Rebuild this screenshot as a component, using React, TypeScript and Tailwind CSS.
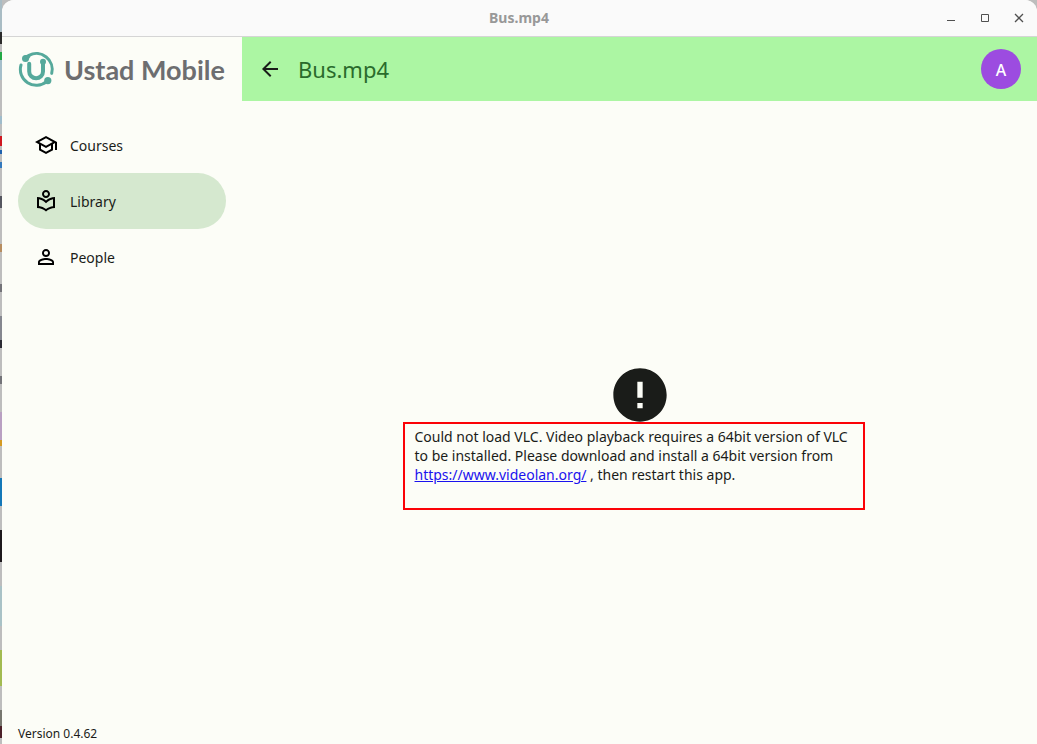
import type { ReactNode } from "react";
import {
  MdArrowBack,
  MdError,
  MdOutlineLocalLibrary,
  MdOutlineSchool,
  MdPersonOutline,
} from "react-icons/md";

function DesktopEdge() {
  return (
    <div aria-hidden="true" className="flex w-0.5 shrink-0 flex-col bg-[#bdbdbd]">
      <div className="h-8 bg-[#a9bcc4]" />
      <div className="h-3 bg-[#2b2b2b]" />
      <div className="mt-2 h-2 bg-[#22a845]" />
      <div className="h-5 bg-[#a5bfca]" />
      <div className="mt-9 h-2 bg-[#9fbccb]" />
      <div className="mt-3 h-2.5 bg-[#cf1820]" />
      <div className="mt-1 h-1 bg-[#1f62ae]" />
      <div className="mt-2 h-1.5 bg-[#3379bd]" />
      <div className="mt-7 h-3 bg-[#55565f]" />
      <div className="mt-9 h-2 bg-[#b78d60]" />
      <div className="mt-8 h-2 bg-[#737378]" />
      <div className="mt-6 h-6 bg-[#85878f]" />
      <div className="h-2 bg-[#2a2a33]" />
      <div className="mt-7 h-2 bg-[#737378]" />
      <div className="mt-7 h-7 bg-[#b9a0c2]" />
      <div className="h-1.5 bg-[#d49a22]" />
      <div className="mt-8 h-7 bg-[#1478b8]" />
      <div className="mt-6 h-8 bg-[#1d191c]" />
      <div className="mt-6 h-10 bg-[#a9c2c6]" />
      <div className="mt-6 h-9 bg-[#a2bb51]" />
      <div className="mt-6 h-4 bg-[#77776f]" />
      <div className="h-3 bg-[#4b2028]" />
    </div>
  );
}

function TitleBar() {
  return (
    <div className="flex h-[37px] items-center justify-end rounded-t-xl border-b border-[#d5d5d5] bg-[#fafafa] pr-[7px]">
      <h1 className="flex-1 pl-24 text-center text-sm font-bold text-[#989898]">Bus.mp4</h1>
      <div className="flex gap-3 text-[#505050]">
        <button type="button" aria-label="Minimize" className="p-[3px]">
          <svg viewBox="0 0 16 16" className="size-4" stroke="currentColor" fill="none">
            <path d="M4 10.5h8" />
          </svg>
        </button>
        <button type="button" aria-label="Maximize" className="p-[3px]">
          <svg viewBox="0 0 16 16" className="size-4" stroke="currentColor" fill="none">
            <path d="M4.5 4.5h7v7h-7z" />
          </svg>
        </button>
        <button type="button" aria-label="Close" className="p-[3px]">
          <svg viewBox="0 0 16 16" className="size-4" stroke="currentColor" strokeWidth="1.3" fill="none">
            <path d="M4 4l8 8M12 4l-8 8" />
          </svg>
        </button>
      </div>
    </div>
  );
}

function Logo() {
  return (
    <div className="flex h-16 items-center gap-2 pl-4">
      <svg viewBox="0 0 37 37" className="size-[37px] shrink-0" fill="none" stroke="#55a99b">
        <g strokeWidth="3" strokeLinecap="round">
          <path d="M11 4.3A15.9 15.9 0 0 1 33.7 22.4" />
          <path d="M3 14A15.9 15.9 0 0 0 28.5 30.6" />
        </g>
        <path d="M11.2 12.8V20.4a6.9 6.9 0 0 0 13.8 0V11" strokeWidth="4" strokeLinecap="round" />
        <g fill="#55a99b" stroke="none">
          <circle cx="7.5" cy="7.4" r="3.5" />
          <path d="M5.8 4.9L11 2.9l1.5 2.8-3 4z" />
          <circle cx="29.8" cy="29.6" r="3.6" />
          <circle cx="25" cy="10.8" r="3" />
        </g>
      </svg>
      <span className="pt-0.5 pl-px font-[Lato] text-[27px] font-bold whitespace-nowrap text-[#6d6e70]">
        Ustad Mobile
      </span>
    </div>
  );
}

function NavItem({ icon, label, active }: { icon: ReactNode; label: string; active?: boolean }) {
  return (
    <a
      href="#"
      aria-current={active ? "page" : undefined}
      className={
        active
          ? "flex h-14 items-center gap-3 rounded-full bg-[#d5e8cf] px-4 text-sm"
          : "flex h-14 items-center gap-3 rounded-full px-4 text-sm"
      }
    >
      <span className="text-2xl text-black">{icon}</span>
      <span className="pt-0.5">{label}</span>
    </a>
  );
}

export default function App() {
  return (
    <div className="flex min-h-screen bg-[#bdbdbd] font-['Noto_Sans',sans-serif] text-[#1a1c19]">
      <DesktopEdge />
      <div className="flex min-w-0 flex-1 flex-col rounded-t-xl bg-[#fcfdf7]">
        <TitleBar />
        <div className="flex flex-1">
          <aside className="flex w-60 shrink-0 flex-col">
            <Logo />
            <nav className="flex-1 px-4 pt-4">
              <NavItem icon={<MdOutlineSchool />} label="Courses" />
              <NavItem icon={<MdOutlineLocalLibrary />} label="Library" active />
              <NavItem icon={<MdPersonOutline />} label="People" />
            </nav>
            <p className="px-4 pb-0.5 text-xs leading-4">Version 0.4.62</p>
          </aside>
          <div className="flex min-w-0 flex-1 flex-col">
            <header className="flex h-16 items-center bg-[#acf6a3] px-4">
              <button type="button" aria-label="Back" className="text-2xl">
                <MdArrowBack />
              </button>
              <h2 className="flex-1 pl-4 text-[22px] text-[#2a6b2c]">Bus.mp4</h2>
              <button
                type="button"
                className="size-10 rounded-full bg-[#9c4ce0] pt-0.5 text-base font-medium text-white"
              >
                A
              </button>
            </header>
            <main className="flex flex-1 flex-col items-center justify-center pt-0.5">
              <MdError className="size-16" />
              <div className="relative w-full max-w-[450px]">
                <p className="text-sm leading-[19px]">
                  Could not load VLC. Video playback requires a 64bit version of VLC to be installed.
                  Please download and install a 64bit version from{" "}
                  <a href="https://www.videolan.org/" className="text-[#1a12ee] underline">
                    https://www.videolan.org/
                  </a>{" "}
                  , then restart this app.
                </p>
                <div className="pointer-events-none absolute -top-[5px] right-0 -bottom-[26px] -left-3 border-2 border-[#fb0207]" />
              </div>
            </main>
          </div>
        </div>
      </div>
    </div>
  );
}
